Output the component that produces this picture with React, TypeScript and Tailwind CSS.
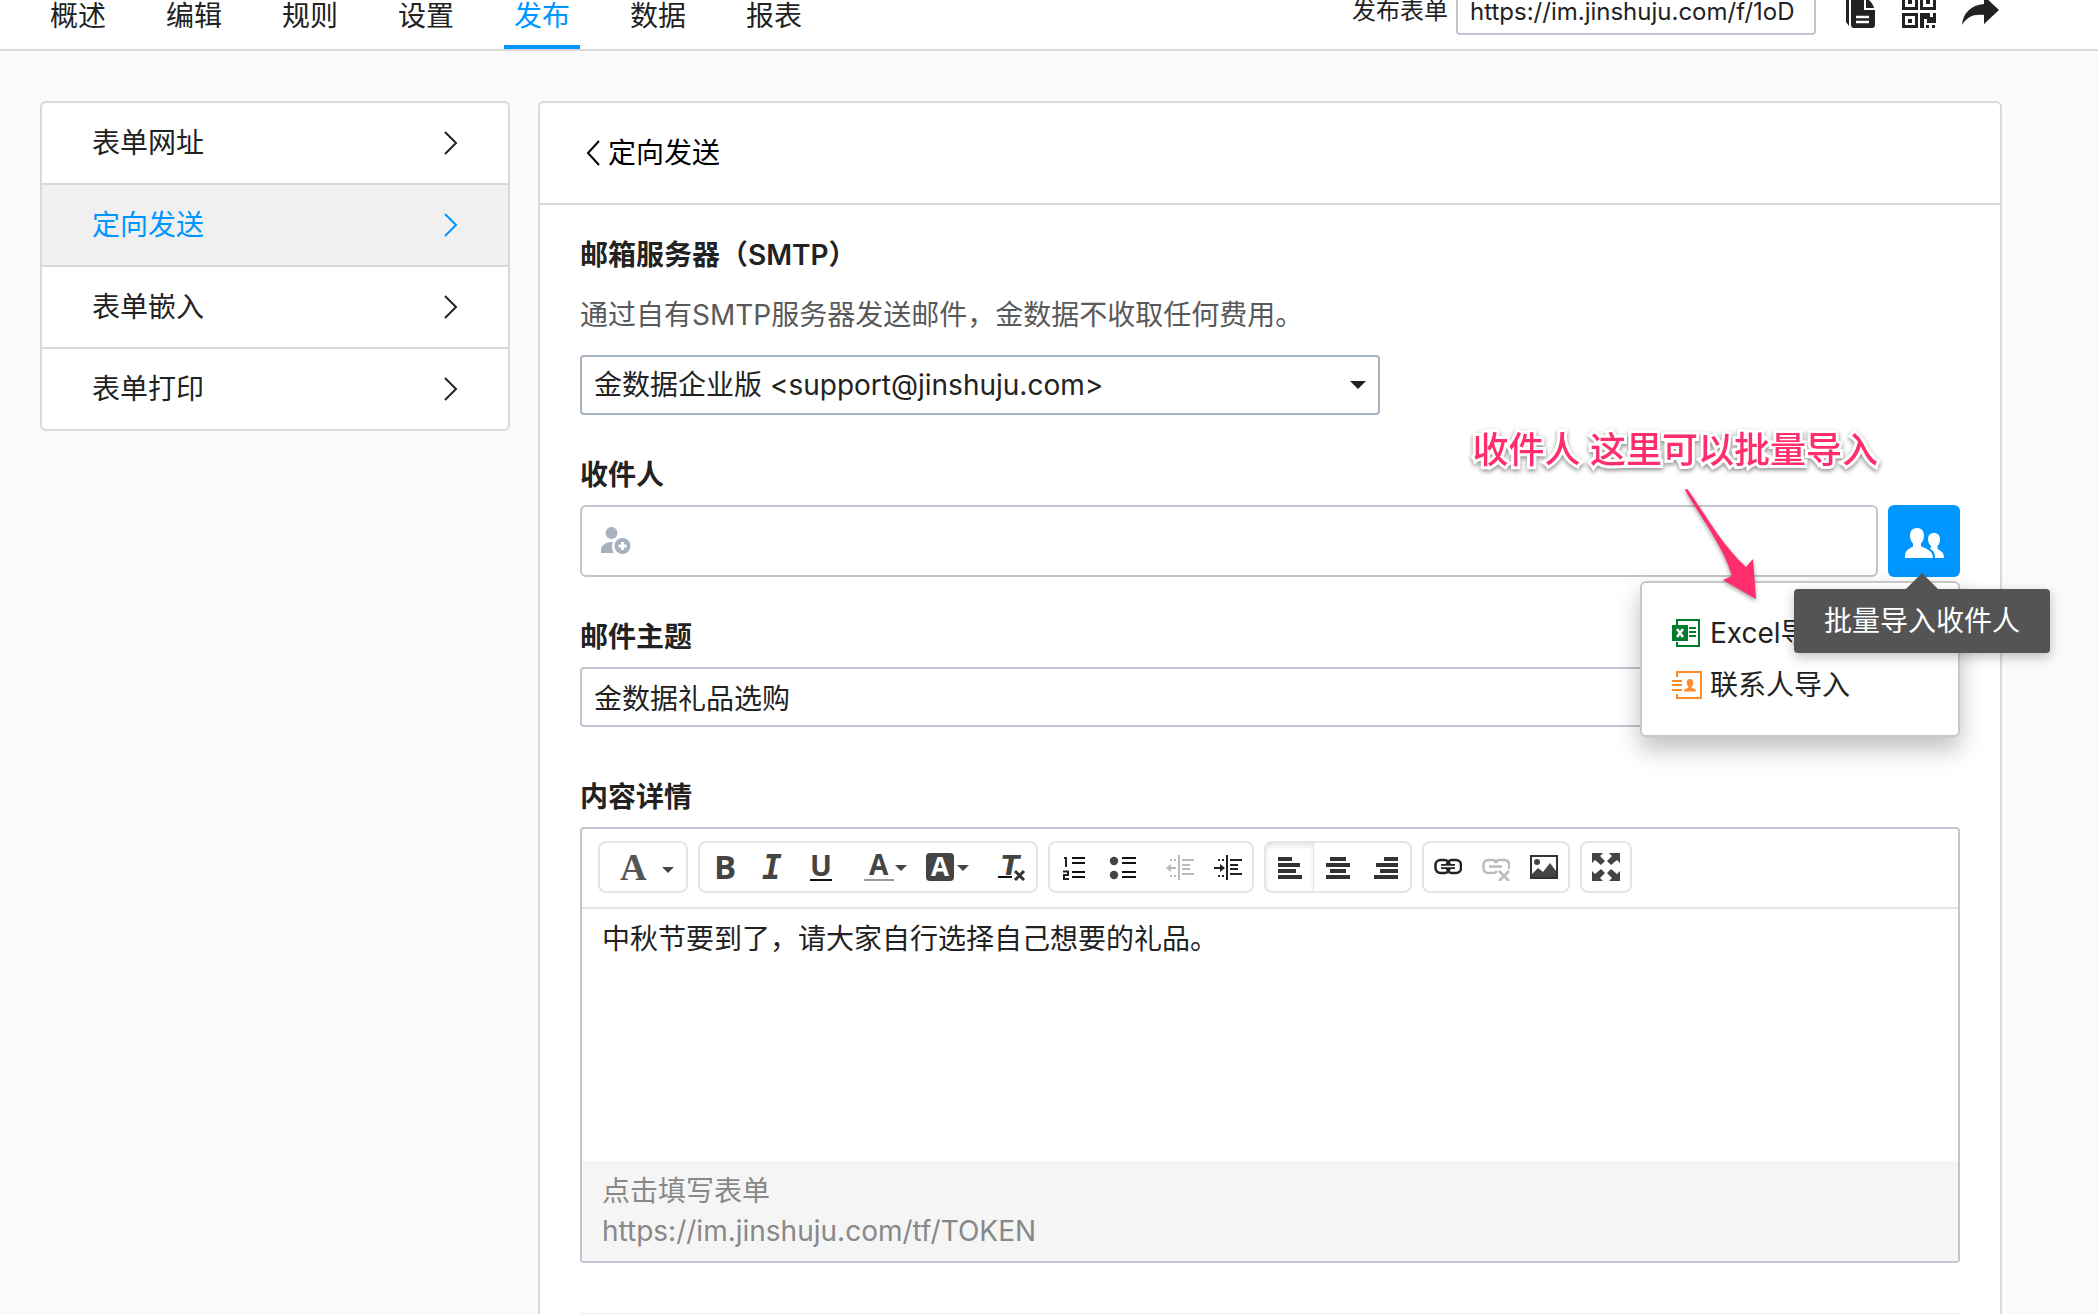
import { useState } from 'react'
import type { ReactNode } from 'react'
import clsx from 'clsx'

const tabs = ['概述', '编辑', '规则', '设置', '发布', '数据', '报表']
const sideItems = ['表单网址', '定向发送', '表单嵌入', '表单打印']

function Caret({ x, y }: { x: number; y: number }) {
  return <path d={`M${x} ${y}h12l-6 6z`} fill="#444" />
}

function ToolGroup({ children }: { children: ReactNode }) {
  return <div className="flex h-[52px] rounded-lg border-2 border-[#e5e5e5]">{children}</div>
}

function Tool({ label, children, className = 'w-12', width = 28 }: {
  label: string
  children: ReactNode
  className?: string
  width?: number
}) {
  return (
    <button type="button" aria-label={label} className={clsx('flex items-center justify-center', className)}>
      <svg width={width} height="28" viewBox={`0 0 ${width} 28`} fill="#444">
        {children}
      </svg>
    </button>
  )
}

function Header() {
  return (
    <header className="flex h-[51px] items-start justify-between overflow-hidden border-b-2 border-[#d9d9d9] bg-white pl-10 pr-[98px]">
      <nav className="flex gap-10">
        {tabs.map((tab) => (
          <a
            key={tab}
            href="#"
            className={clsx(
              'h-[49px] border-b-4 px-2.5 leading-8',
              tab === '发布' ? 'border-[#0096ff] text-[#0096ff]' : 'border-transparent'
            )}
          >
            {tab}
          </a>
        ))}
      </nav>
      <div className="-mt-[13px] flex h-12 items-center">
        <label htmlFor="form-url" className="text-2xl">发布表单</label>
        <input
          id="form-url"
          readOnly
          defaultValue="https://im.jinshuju.com/f/1oD"
          className="ml-2 h-12 w-[360px] rounded-sm border-2 border-[#c0c6cf] px-3 text-2xl outline-none"
        />
        <button type="button" aria-label="复制" className="ml-7">
          <svg width="36" height="36" viewBox="0 0 36 36" fill="#222">
            <path d="M2 6l3-2v29l-3-4z" />
            <path d="M9 0h11v17h11v15a3 3 0 0 1-3 3H10a3 3 0 0 1-3-3V2a2 2 0 0 1 2-2z" />
            <path d="M22 5c4 2 7 6 8 10h-8z" />
            <path d="M12 24h13M12 29h13" stroke="#fff" strokeWidth="2.5" />
          </svg>
        </button>
        <button type="button" aria-label="二维码" className="ml-[22px]">
          <svg width="34" height="34" viewBox="0 0 34 34" fill="#222">
            <path fillRule="evenodd" d="M0 0h16v16H0zM3 3v10h10V3z M18 0h16v16H18zM21 3v10h10V3z M0 19h16v15H0zM3 22v9h10v-9z" />
            <path d="M6 6h4v4H6zM24 6h4v4h-4zM6 25h4v4H6z" />
            <path d="M18 19h10v4h3v-4h3v10h-9v-4h-3v9h-4zM24 31h3v3h-3zM30 31h3v3h-3z" />
          </svg>
        </button>
        <button type="button" aria-label="分享" className="ml-6">
          <svg width="40" height="34" viewBox="0 0 40 34" fill="#222">
            <path d="M24 2l15 14-15 14v-9C13 20 7 23 2 31 3 19 11 11 24 10z" />
          </svg>
        </button>
      </div>
    </header>
  )
}

function Sidebar() {
  return (
    <aside className="w-[470px] shrink-0 self-start overflow-hidden rounded-md border-2 border-[#d9d9d9] bg-white">
      {sideItems.map((item, i) => (
        <a
          key={item}
          href="#"
          className={clsx(
            'flex h-20 items-center justify-between px-[50px]',
            i > 0 && 'box-content border-t-2 border-[#d9d9d9]',
            item === '定向发送' && 'bg-[#f0f0f0] text-[#0096ff]'
          )}
        >
          {item}
          <svg width="14" height="26" viewBox="0 0 14 26" fill="none" stroke="currentColor" strokeWidth="2">
            <path d="M1 2l11 11L1 24" />
          </svg>
        </a>
      ))}
    </aside>
  )
}

function ImportMenu() {
  return (
    <div className="absolute right-0 top-full z-10 mt-1 w-80 rounded-md border-2 border-[#c8c8c8] bg-white py-6 pl-[30px] shadow-[0_12px_24px_rgba(0,0,0,0.26)]">
      <button type="button" className="flex h-[52px] items-center gap-2">
        <svg width="30" height="28" viewBox="0 0 30 28" fill="#007d2c">
          <path d="M4 0h24v28H4v-5h2v3h20V2H6v4H4z" />
          <path d="M0 6h16v16H0zM17 8h7v2h-7zM17 12h7v2h-7zM17 16h7v2h-7z" />
          <path d="M5 10l6 8M11 10l-6 8" stroke="#fff" strokeWidth="2.5" />
        </svg>
        Excel导入
      </button>
      <button type="button" className="flex h-[52px] items-center gap-2">
        <svg width="30" height="28" viewBox="0 0 30 28" fill="#ff8a26">
          <path d="M4 0h26v28H4v-5h2v3h22V2H6v4H4z" />
          <path d="M0 9h10v2H0zM0 13h10v2H0zM0 18h10v2H0z" />
          <path d="M18 8c2 0 3.200 1.500 3.200 3.500 0 2-.7 3-1.400 4v1.500c2 .6 4.200 1 4.200 3.500H12c0-2.500 2.200-2.900 4.200-3.500v-1.500c-.7-1-1.400-2-1.400-4C14.800 9.500 16 8 18 8z" />
        </svg>
        联系人导入
      </button>
    </div>
  )
}

function Tooltip() {
  return (
    <div
      role="tooltip"
      className="absolute -right-[90px] top-full z-20 mt-3 whitespace-nowrap rounded-sm bg-[#545454] px-[30px] leading-[64px] text-white shadow-[0_4px_12px_rgba(0,0,0,0.25)]"
    >
      <svg className="absolute bottom-full left-1/2 -translate-x-1/2" width="32" height="16" viewBox="0 0 32 16">
        <path d="M16 0l16 16H0z" fill="#545454" />
      </svg>
      批量导入收件人
    </div>
  )
}

function Annotation() {
  return (
    <>
      <p className="absolute -top-[25px] right-[82px] whitespace-nowrap text-4xl font-medium leading-10 text-[#ff2d6c] drop-shadow-[0_2px_2px_rgba(0,0,0,0.45)] [-webkit-text-stroke:6px_white] [paint-order:stroke]">
        收件人 这里可以批量导入
      </p>
      <svg
        className="absolute right-[194px] top-[29px] z-30 drop-shadow-[0_2px_2px_rgba(0,0,0,0.4)]"
        width="86"
        height="122"
        viewBox="0 0 86 122"
      >
        <path d="M5 6q1.500-2 3 0C25 30 42 61 66 83l7-8 3 40-33-19 9-4C43 61 19 31 5 6z" fill="#ff2d6c" />
      </svg>
    </>
  )
}

function Toolbar() {
  return (
    <div className="flex gap-2.5 border-b-2 border-[#e5e5e5] px-4 pb-[14px] pt-3">
      <ToolGroup>
        <Tool label="字体" className="w-[86px]" width={62}>
          <text x="8" y="27" fontSize="37" className="font-['Liberation_Serif',serif] font-bold" fill="#555">A</text>
          <Caret x={50} y={14} />
        </Tool>
      </ToolGroup>
      <ToolGroup>
        <Tool label="粗体">
          <text x="4" y="26" fontSize="33" className="font-['Open_Sans',sans-serif] font-bold">B</text>
        </Tool>
        <Tool label="斜体">
          <text x="4" y="26" fontSize="33" className="font-['DejaVu_Sans_Mono',monospace] font-bold italic">I</text>
        </Tool>
        <Tool label="下划线">
          <text x="4" y="23" fontSize="29" className="font-['Open_Sans',sans-serif] font-bold">U</text>
          <path d="M4 26h22v2H4z" fill="#111" />
        </Tool>
        <div className="flex px-2.5">
          <Tool label="文字颜色" className="w-[62px]" width={44}>
            <text x="6" y="22" fontSize="28" className="font-['Open_Sans',sans-serif] font-bold">A</text>
            <path d="M1 26h30v3H1z" fill="#999" />
            <Caret x={32} y={12} />
          </Tool>
          <Tool label="背景颜色" className="w-[62px]" width={44}>
            <rect x="1" width="28" height="28" rx="4" />
            <text x="6" y="23" fontSize="26" className="font-['Open_Sans',sans-serif] font-bold" fill="#fff">A</text>
            <Caret x={32} y={12} />
          </Tool>
        </div>
        <Tool label="清除格式">
          <text x="3" y="22" fontSize="27" className="font-['DejaVu_Sans',sans-serif] font-bold italic">T</text>
          <path d="M0 23h14v2H0z" fill="#111" />
          <path d="M17 18l9 9M26 18l-9 9" stroke="#333" strokeWidth="3" />
        </Tool>
      </ToolGroup>
      <ToolGroup>
        <Tool label="编号列表">
          <path d="M12 4h13v2H12zM12 9h13v2H12zM12 18h13v2H12zM12 23h13v2H12z" fill="#111" />
          <path d="M4 5h2v9M3 18.500h5v3.500H4v4h5" fill="none" stroke="#222" strokeWidth="2" />
        </Tool>
        <Tool label="项目列表">
          <circle cx="6" cy="8" r="4.200" />
          <circle cx="6" cy="22" r="4.200" />
          <path d="M14 4h14v2H14zM14 9h14v2H14zM14 18h14v2H14zM14 23h14v2H14z" fill="#111" />
        </Tool>
        <Tool label="减少缩进" className="ml-2.5 w-12">
          <path
            d="M12 2h2v25h-2zM16 6h12v2H16zM16 11h8v2h-8zM16 15h8v2h-8zM16 20h12v2H16zM4 6h2v2H4zM8 6h2v2H8zM4 22h2v2H4zM8 22h2v2H8zM0 15l5-4v3h5v2H5v3z"
            fill="#bbb"
          />
        </Tool>
        <Tool label="增加缩进">
          <path
            d="M12 2h2v25h-2zM16 6h12v2H16zM16 11h8v2h-8zM16 15h8v2h-8zM16 20h12v2H16zM4 6h2v2H4zM8 6h2v2H8zM4 22h2v2H4zM8 22h2v2H8zM11 15l-5-4v3H0v2h6v3z"
            fill="#222"
          />
        </Tool>
      </ToolGroup>
      <ToolGroup>
        <Tool label="左对齐" className="w-12 rounded-l-md border-r border-[#e5e5e5] shadow-[inset_0_3px_5px_rgba(0,0,0,0.1)]">
          <path d="M2 4h14v4H2zM2 10h22v4H2zM2 16h18v4H2zM2 22h24v4H2z" fill="#333" />
        </Tool>
        <Tool label="居中">
          <path d="M6 4h16v4H6zM2 10h24v4H2zM6 16h16v4H6zM2 22h24v4H2z" fill="#333" />
        </Tool>
        <Tool label="右对齐">
          <path d="M12 4h14v4H12zM4 10h22v4H4zM8 16h18v4H8zM2 22h24v4H2z" fill="#333" />
        </Tool>
      </ToolGroup>
      <ToolGroup>
        <Tool label="链接">
          <g fill="none" stroke="#222" strokeWidth="2.5">
            <rect x="1.500" y="7" width="14" height="13" rx="5" />
            <rect x="13" y="7" width="14" height="13" rx="5" />
            <path d="M7 13.500h14" strokeWidth="5" />
          </g>
          <path d="M7 13.500h14" stroke="#fff" strokeWidth="1.500" />
        </Tool>
        <Tool label="取消链接">
          <g fill="none" stroke="#bbb" strokeWidth="2.500">
            <path d="M15 18c-1 1.500-2 2-4 2H6.500c-3 0-5-2-5-5v-3c0-3 2-5 5-5H11c2 0 3 1 4 3" />
            <path d="M13 10c1-2 2-3 4-3h5c5 0 6 4 5 9M7 13.500h13M17 18l10 10M27 18L17 28" />
          </g>
        </Tool>
        <Tool label="图片">
          <path fillRule="evenodd" d="M0 2h28v24H0zM2 4v20h24V4z" fill="#333" />
          <circle cx="7" cy="9" r="3" />
          <path d="M2 24v-3l6-6 5 4 7-9 6 8v6z" />
        </Tool>
      </ToolGroup>
      <ToolGroup>
        <Tool label="全屏">
          <path d="M0 0h11L8 3l5 5-4 4-6-5-3 3zM28 0H17l3 3-5 5 4 4 6-5 3 3zM0 28h11l-3-3 5-5-4-4-6 5-3-3zM28 28H17l3-3-5-5 4-4 6 5 3-3z" />
        </Tool>
      </ToolGroup>
    </div>
  )
}

export default function App() {
  const [content, setContent] = useState('中秋节要到了，请大家自行选择自己想要的礼品。')

  return (
    <div className="h-screen overflow-hidden bg-[#fafafa] font-['Inter','Noto_Sans_CJK_SC',sans-serif] text-[28px] leading-10 text-[#222]">
      <Header />

      <div className="flex gap-7 pl-10 pr-24 pt-[50px]">
        <Sidebar />

        <main className="min-w-0 flex-1 rounded-md border-2 border-[#d9d9d9] bg-white">
          <div className="flex h-[102px] items-center border-b-2 border-[#d9d9d9] px-10 text-black">
            <a href="#" className="flex items-center">
              <svg width="28" height="28" viewBox="0 0 28 28" fill="none" stroke="currentColor" strokeWidth="2">
                <path d="M19 2L8 14l11 12" />
              </svg>
              定向发送
            </a>
          </div>

          <form className="px-10 pb-20 pt-[30px]">
            {/* SMTP server */}
            <label htmlFor="smtp" className="block font-semibold">邮箱服务器（SMTP）</label>
            <p className="mt-5 text-[#595959]">通过自有SMTP服务器发送邮件，金数据不收取任何费用。</p>
            <div className="relative mt-5 w-[800px]">
              <select id="smtp" className="h-[60px] w-full appearance-none rounded-sm border-2 border-[#a8b1bf] bg-white px-3 outline-none">
                <option>金数据企业版 &lt;support@jinshuju.com&gt;</option>
              </select>
              <svg className="pointer-events-none absolute right-[14px] top-[26px]" width="16" height="8" viewBox="0 0 16 8">
                <path d="M0 0h16L8 8z" fill="#222" />
              </svg>
            </div>

            {/* Recipients */}
            <div className="relative mt-10">
              <label htmlFor="recipients" className="block font-semibold">收件人</label>
              <div className="mt-2.5 flex gap-2.5">
                <div className="relative flex-1">
                  <input id="recipients" className="h-[72px] w-full rounded-md border-2 border-[#c0c6cf] pl-16 outline-none" />
                  <svg className="pointer-events-none absolute left-5 top-[22px]" width="31" height="28" viewBox="0 0 31 28" fill="#a8b1bf">
                    <circle cx="11.500" cy="6" r="6" />
                    <path d="M1 26v-3c0-5 5-8 11-8h1c-1.500 4-1.500 8 1 11z" />
                    <circle cx="22.500" cy="19" r="8" />
                    <path d="M22.500 15v8M18.500 19h8" stroke="#fff" strokeWidth="3" />
                  </svg>
                </div>
                <div className="relative">
                  <button type="button" aria-label="批量导入收件人" className="flex size-[72px] items-center justify-center rounded-md bg-[#0096ff] pt-1">
                    <svg width="40" height="32" viewBox="0 0 40 32" fill="#fff">
                      <path d="M13 1c4.500 0 7 3 7 7.500 0 4-1.500 6-3 8v3c3 1.500 12 3 12 11.500H1c0-6 1-8 8-11.500v-3c-1.500-2-3-4-3-8C6 4 8.500 1 13 1z" />
                      <path d="M30 6c4 0 6 2.500 6 6.500 0 3-1 5-2.500 6.500v3c2 1.500 6.500 2 6.500 9h-9c0-5-1.500-7-5-9.500l1-1V19c-2-2-3-4-3-6.500C24 8.500 26 6 30 6z" />
                    </svg>
                  </button>
                  <ImportMenu />
                  <Tooltip />
                </div>
              </div>
              <Annotation />
            </div>

            {/* Subject */}
            <label htmlFor="subject" className="mt-10 block font-semibold">邮件主题</label>
            <input
              id="subject"
              defaultValue="金数据礼品选购"
              className="mt-2.5 block h-[60px] w-full rounded-sm border-2 border-[#c0c6cf] px-3 outline-none"
            />

            {/* Mail body */}
            <label htmlFor="content" className="mt-[50px] block font-semibold">内容详情</label>
            <div className="mt-2.5 rounded-sm border-2 border-[#c0c6cf]">
              <Toolbar />
              <textarea
                id="content"
                value={content}
                onChange={(e) => setContent(e.target.value)}
                className="block h-[252px] w-full resize-none px-5 py-2.5 outline-none"
              />
              <div className="bg-[#f5f5f5] px-5 py-2.5 text-[#888]">
                <p>点击填写表单</p>
                <p>https://im.jinshuju.com/tf/TOKEN</p>
              </div>
            </div>
            <hr className="mt-[50px] border-t-2 border-[#ececec]" />
          </form>
        </main>
      </div>
    </div>
  )
}
